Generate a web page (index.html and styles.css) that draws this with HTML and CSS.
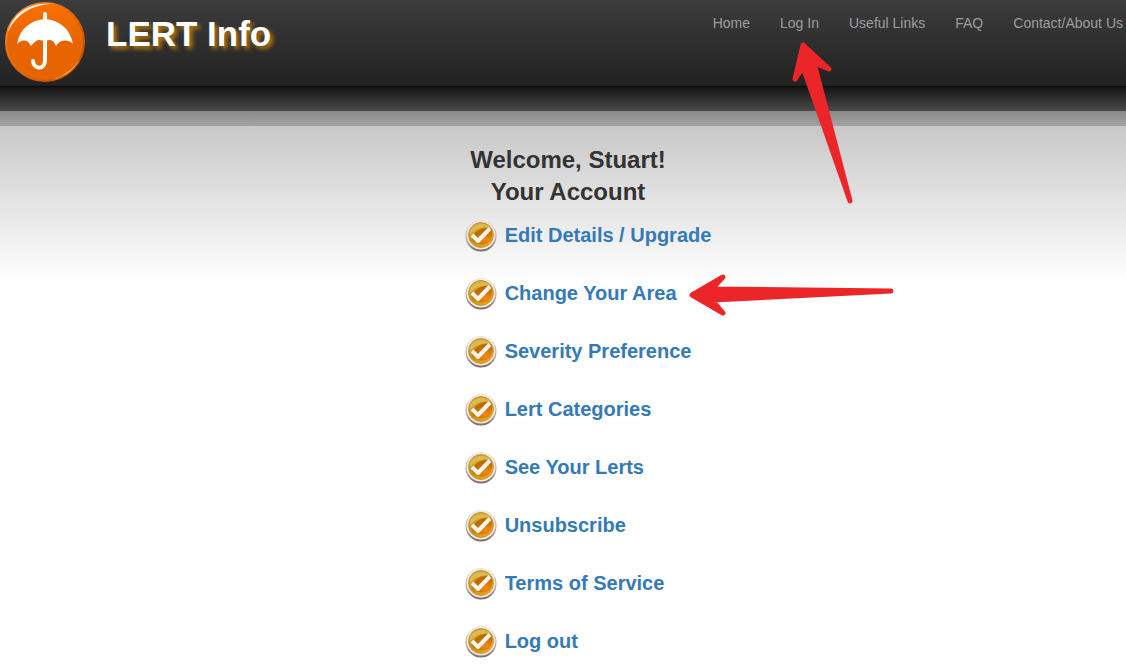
FILE: index.html
```html
<!DOCTYPE html>
<html lang="en">
<head>
  <meta charset="UTF-8" />
  <meta name="viewport" content="width=device-width, initial-scale=1.0"/>
  <title>LERT Info - Your Account</title>

  <link rel="stylesheet" href="styles.css">
</head>
<body>
  <!-- shared icon -->
  <svg class="defs" width="0" height="0" aria-hidden="true">
    <defs>
      <linearGradient id="rim" x1="0" y1="0" x2="0" y2="1">
        <stop offset="0" stop-color="#c9b48a" />
        <stop offset="0.6" stop-color="#b9a49a" />
        <stop offset="1" stop-color="#7d6a68" />
      </linearGradient>
      <linearGradient id="gold" x1="0" y1="0" x2="1" y2="1">
        <stop offset="0" stop-color="#d9b64a" />
        <stop offset="0.45" stop-color="#c98f08" />
        <stop offset="1" stop-color="#ffb01e" />
      </linearGradient>
      <radialGradient id="glow" cx="0.7" cy="0.75" r="0.6">
        <stop offset="0" stop-color="#f58a10" />
        <stop offset="1" stop-color="#b86c00" />
      </radialGradient>
      <symbol id="check" viewBox="0 0 32 32">
        <circle cx="16" cy="16" r="15.500" fill="url(#rim)" />
        <circle cx="16" cy="15" r="14.500" fill="#f6ece8" />
        <circle cx="16" cy="15" r="12.500" fill="url(#gold)" stroke="#b98d3c" stroke-width="0.800" />
        <path d="M7 19 C10 10 18 7 26 8 C28 13 27 19 23 23 C17 26 10 24 7 19 Z" fill="url(#glow)" />
        <path d="M5 11 C10 2 22 2 26 8 C19 6 10 9 5 15 Z" fill="#e2c566" opacity="0.7" />
        <path d="M7 15 L13 21 L25 8.500" fill="none" stroke="#fff4ee" stroke-width="4" stroke-linejoin="round" />
      </symbol>
    </defs>
  </svg>

  <header class="navbar">
    <a class="brand" href="#">
      <svg class="logo" viewBox="0 0 84 84" role="img" aria-label="Umbrella logo">
        <defs>
          <linearGradient id="orange" x1="0" y1="0" x2="0" y2="1">
            <stop offset="0" stop-color="#f97000" />
            <stop offset="0.5" stop-color="#e86400" />
            <stop offset="1" stop-color="#e66500" />
          </linearGradient>
          <linearGradient id="edge" x1="0" y1="0" x2="1" y2="1">
            <stop offset="0" stop-color="#ff8a2a" />
            <stop offset="0.7" stop-color="#d85a00" />
            <stop offset="1" stop-color="#a84a00" />
          </linearGradient>
        </defs>
        <circle cx="42" cy="42" r="39" fill="url(#orange)" stroke="url(#edge)" stroke-width="2" />
        <path d="M5 32 C10 13 26 2 50 4 C31 4 14 13 5 32 Z" fill="#fff3e6" />
        <path d="M49 80 C62 77 72 69 77 59 C70 69 61 76 49 80 Z" fill="#ffb050" />
        <path d="M14 44 C17 28 28 20 42 19 C56 20 67 28 70 44 C66 39 57 39 53 46 C50 39 46 39 42 42 C37 39 34 39 28 46 C25 39 18 39 14 44 Z" fill="#fff" />
        <path d="M42 14 V60 C42 70 31 70 30 61" fill="none" stroke="#fff" stroke-width="4" stroke-linecap="round" />
      </svg>
      <span class="brand-name">LERT Info</span>
    </a>
    <nav>
      <ul class="nav-links">
        <li><a href="#">Home</a></li>
        <li>
          <a href="#">Log In</a>
          <svg class="arrow arrow-up" width="64" height="164" viewBox="0 0 64 164" aria-hidden="true">
            <path d="M12 4 L38 28 L23 22 L59 160 L12 26 L4 38 Z" />
          </svg>
        </li>
        <li><a href="#">Useful Links</a></li>
        <li><a href="#">FAQ</a></li>
        <li><a href="#">Contact/About Us</a></li>
      </ul>
    </nav>
  </header>
  <div class="band-dark"></div>
  <div class="band-grey"></div>

  <main>
    <div class="account">
      <h1 class="title">Welcome, Stuart!<br>Your Account</h1>
      <ul class="menu">
        <li><a href="#"><svg class="icon"><use href="#check" /></svg>Edit Details / Upgrade</a></li>
        <li>
          <a href="#"><svg class="icon"><use href="#check" /></svg>Change Your Area</a>
          <svg class="arrow arrow-left" width="206" height="42" viewBox="0 0 206 42" aria-hidden="true">
            <path d="M3 21 L34 3 L23 15 L202 17 L23 26 L34 39 Z" />
          </svg>
        </li>
        <li><a href="#"><svg class="icon"><use href="#check" /></svg>Severity Preference</a></li>
        <li><a href="#"><svg class="icon"><use href="#check" /></svg>Lert Categories</a></li>
        <li><a href="#"><svg class="icon"><use href="#check" /></svg>See Your Lerts</a></li>
        <li><a href="#"><svg class="icon"><use href="#check" /></svg>Unsubscribe</a></li>
        <li><a href="#"><svg class="icon"><use href="#check" /></svg>Terms of Service</a></li>
        <li><a href="#"><svg class="icon"><use href="#check" /></svg>Log out</a></li>
      </ul>
    </div>
  </main>
</body>
</html>
```

FILE: styles.css
```css
* {
  margin: 0;
  padding: 0;
  box-sizing: border-box;
}

body {
  font-family: "Liberation Sans", Arial, sans-serif;
  font-size: 14px;
  color: #333;
  background: white;
}

a {
  text-decoration: none;
}

ul {
  list-style: none;
}

.defs {
  position: absolute;
}

.navbar {
  display: flex;
  justify-content: space-between;
  align-items: flex-start;
  height: 87px;
  background: linear-gradient(to bottom, #3c3c3c, #222);
  border-bottom: 1px solid #080808;
}

.brand {
  display: flex;
  padding-left: 3px;
}

.logo {
  width: 84px;
  height: 84px;
}

.brand-name {
  margin-left: 19px;
  line-height: 68px;
  font-size: 35px;
  font-weight: bold;
  color: white;
  text-shadow: 3px 3px 4px #b8780a;
}

.nav-links {
  display: flex;
  gap: 30px;
  padding: 13px 3px 0 0;
  line-height: 20px;
}

.nav-links li {
  position: relative;
}

.nav-links a {
  color: #9d9d9d;
}

.nav-links a:hover {
  color: white;
}

.band-dark {
  height: 24px;
  background: linear-gradient(to bottom, #151515, #4a4a4a);
}

.band-grey {
  height: 15px;
  background: linear-gradient(to bottom, #8a8a8a, #a2a2a2);
}

main {
  display: flex;
  justify-content: center;
  padding: 18px 0 0 50px;
  background: linear-gradient(to bottom, #c8c8c8, white 156px);
}

.title {
  padding-right: 40px;
  font-size: 24px;
  line-height: 32px;
  text-align: center;
}

.menu {
  margin-top: 12px;
}

.menu li {
  position: relative;
  height: 58px;
}

.menu a {
  display: flex;
  gap: 8px;
  font-size: 20px;
  font-weight: bold;
  line-height: 30px;
  color: #337ab7;
}

.menu a:hover {
  text-decoration: underline;
}

.icon {
  width: 32px;
  height: 32px;
}

/* red pointers */
.arrow {
  position: absolute;
  z-index: 1;
  pointer-events: none;
  fill: #ec2529;
  stroke: #ec2529;
  stroke-width: 5px;
  stroke-linejoin: round;
}

.arrow-up {
  top: 28px;
  left: 11px;
}

.arrow-left {
  top: -4px;
  left: 224px;
}
```
